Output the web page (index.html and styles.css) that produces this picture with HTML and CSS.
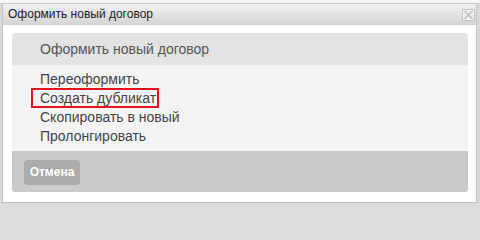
FILE: index.html
```html
<!DOCTYPE html>
<html lang="ru">
<head>
<meta charset="utf-8">
<link rel="stylesheet" href="styles.css">
</head>
<body>
<div class="page">
  <div class="window">
    <div class="titlebar">
      <span class="title">Оформить новый договор</span>
      <span class="close"><svg width="11" height="10" viewBox="0 0 11 10"><path d="M1.5 1 L9.5 9 M9.5 1 L1.5 9" stroke="#bdbdbd" stroke-width="1.6"/></svg></span>
    </div>
    <div class="body">
      <div class="panel">
        <div class="panel-head">Оформить новый договор</div>
        <ul class="menu">
          <li><span class="item">Переоформить</span></li>
          <li><span class="item selected">Создать дубликат</span></li>
          <li><span class="item">Скопировать в новый</span></li>
          <li><span class="item">Пролонгировать</span></li>
        </ul>
        <div class="panel-foot">
          <button class="btn">Отмена</button>
        </div>
      </div>
    </div>
  </div>
</div>
</body>
</html>
```
FILE: styles.css
```css
html, body {
  margin: 0;
  padding: 0;
}
body {
  width: 480px;
  height: 204px;
  overflow: hidden;
  background: #dcdcdc;
  font-family: "Liberation Sans", Arial, sans-serif;
}
.page {
  padding: 3px 3px 0 2px;
  background: linear-gradient(#f6f6f6, #f6f6f6) top/100% 3px no-repeat, #d9d9d9;
  height: 204px;
  box-sizing: border-box;
}
.window {
  width: 475px;
  height: 200px;
  box-sizing: border-box;
  border: 1px solid #c4c4c4;
  background: #fff;
  display: flex;
  flex-direction: column;
}
.titlebar {
  height: 20px;
  flex: none;
  background: linear-gradient(#f1f1f1, #d6d6d6);
  border-bottom: 1px solid #cfcfcf;
  display: flex;
  align-items: center;
  justify-content: space-between;
  padding: 0 1px 0 5px;
}
.title {
  font-size: 12px;
  color: #222;
}
.close {
  width: 11px;
  height: 10px;
  border: 1px solid #c2c2c2;
  background: #f0f0f0;
  display: flex;
  margin-top: 1px;
}
.body {
  flex: 1;
  padding: 8px 8px 10px 9px;
}
.panel {
  border-radius: 3px;
  overflow: hidden;
  background: #f4f4f4;
}
.panel-head {
  height: 32px;
  background: #e3e3e3;
  color: #555;
  font-size: 14px;
  line-height: 32px;
  padding-left: 28px;
}
.menu {
  list-style: none;
  margin: 0;
  padding: 4px 0 6px 19px;
}
.menu li {
  height: 19px;
  display: flex;
  align-items: center;
}
.item {
  font-size: 14px;
  color: #444;
  padding: 1px 1px 1px 7px;
  border: 2px solid transparent;
  line-height: 14px;
}
.item.selected {
  border-color: #e3141b;
}
.panel-foot {
  height: 41px;
  background: #cacaca;
  display: flex;
  align-items: center;
  padding-left: 12px;
}
.btn {
  width: 56px;
  height: 25px;
  border: none;
  border-radius: 4px;
  background: #ababab;
  color: #fff;
  font-family: "Liberation Sans", Arial, sans-serif;
  font-weight: bold;
  font-size: 12px;
  padding: 0;
  margin-top: 1px;
}
```
